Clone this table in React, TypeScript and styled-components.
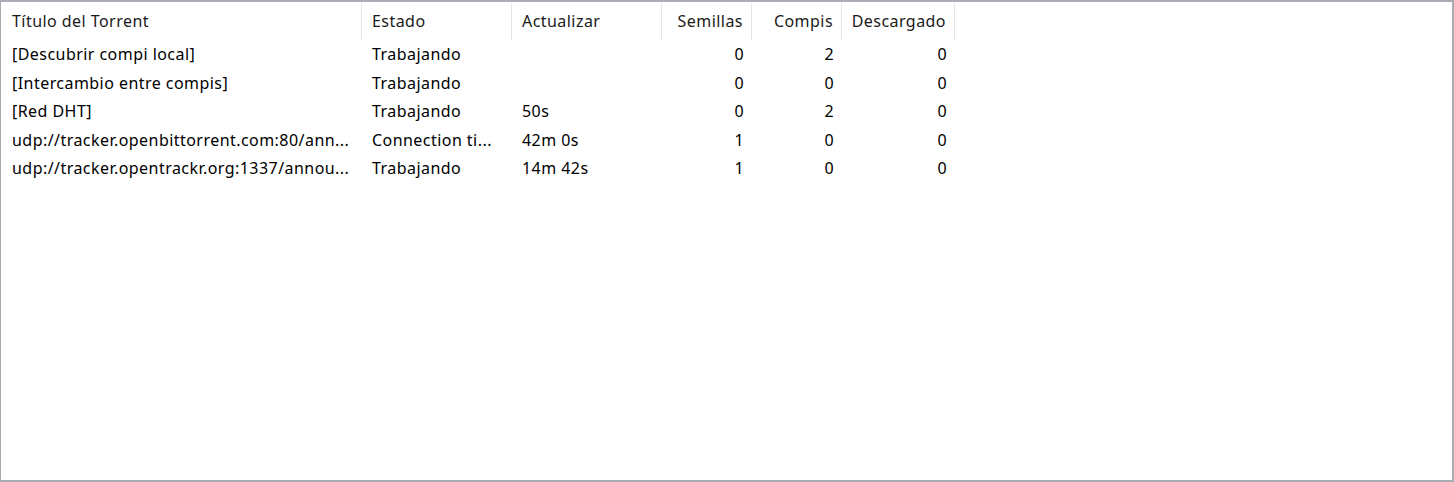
import React from "react";
import styled, { createGlobalStyle } from "styled-components";

const Global = createGlobalStyle`
  html, body { margin: 0; padding: 0; background: #ffffff; }
  body { font-family: "Noto Sans", "Open Sans", sans-serif; }
`;

const Frame = styled.div`
  box-sizing: border-box;
  width: 1454px;
  height: 482px;
  background: #ffffff;
  border-top: 2px solid #a9acb2;
  border-left: 1px solid #a9acb2;
  border-right: 2px solid #a9acb2;
  border-bottom: 2px solid #a9acb2;
  overflow: hidden;
`;

const Grid = styled.div`
  display: grid;
  grid-template-columns: 361px 150px 150px 90px 90px 113px;
  width: 954px;
`;

const HeaderCell = styled.div<{ $right?: boolean; $first?: boolean }>`
  box-sizing: border-box;
  height: 37px;
  display: flex;
  align-items: center;
  justify-content: ${(p) => (p.$right ? "flex-end" : "flex-start")};
  padding: ${(p) => (p.$right ? "0 8px 2px 0" : `0 0 2px ${p.$first ? 11 : 10}px`)};
  font-size: 16px;
  letter-spacing: 0.45px;
  color: #1a1a1a;
  border-right: 1px solid #e5e5e5;
  margin-top: 1px;
  white-space: nowrap;
`;

const Cell = styled.div<{ $right?: boolean; $first?: boolean }>`
  box-sizing: border-box;
  height: 28.5px;
  display: flex;
  align-items: center;
  justify-content: ${(p) => (p.$right ? "flex-end" : "flex-start")};
  padding: ${(p) => (p.$right ? "0 8px 0 0" : `0 0 0 ${p.$first ? 11 : 10}px`)};
  font-size: 16px;
  letter-spacing: 0.45px;
  color: #000000;
  white-space: nowrap;
  overflow: hidden;
`;

const columns: { label: string; right?: boolean }[] = [
  { label: "Título del Torrent" },
  { label: "Estado" },
  { label: "Actualizar" },
  { label: "Semillas", right: true },
  { label: "Compis", right: true },
  { label: "Descargado", right: true },
];

const rows: string[][] = [
  ["[Descubrir compi local]", "Trabajando", "", "0", "2", "0"],
  ["[Intercambio entre compis]", "Trabajando", "", "0", "0", "0"],
  ["[Red DHT]", "Trabajando", "50s", "0", "2", "0"],
  ["udp://tracker.openbittorrent.com:80/ann...", "Connection ti...", "42m 0s", "1", "0", "0"],
  ["udp://tracker.opentrackr.org:1337/annou...", "Trabajando", "14m 42s", "1", "0", "0"],
];

const Body = styled.div`
  display: contents;
`;

export default function App() {
  return (
    <>
      <Global />
      <Frame>
        <Grid>
          {columns.map((c, j) => (
            <HeaderCell key={c.label} $right={c.right} $first={j === 0}>
              {c.label}
            </HeaderCell>
          ))}
          <Body>
            {rows.map((r, i) =>
              r.map((v, j) => (
                <Cell key={`${i}-${j}`} $right={columns[j].right} $first={j === 0}>
                  {v}
                </Cell>
              ))
            )}
          </Body>
        </Grid>
      </Frame>
    </>
  );
}
